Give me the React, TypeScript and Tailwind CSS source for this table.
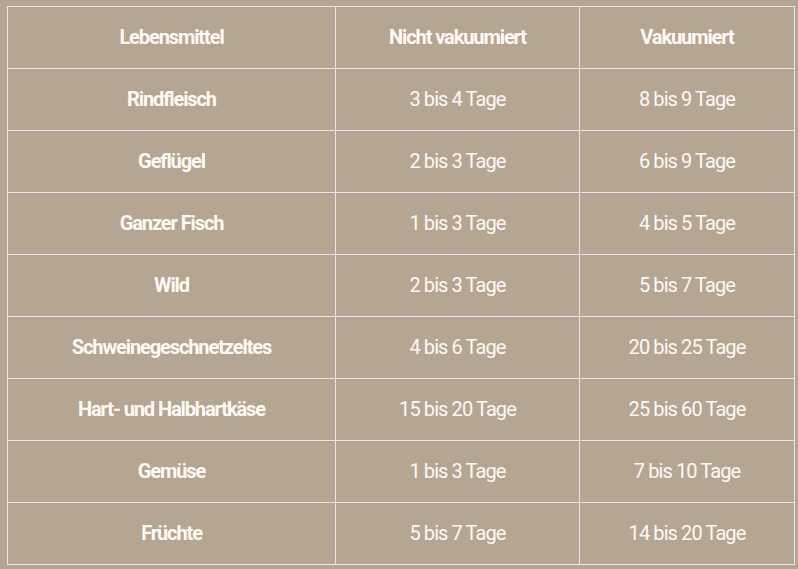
import React from 'react';

const rows: [string, string, string][] = [
  ['Rindfleisch', '3 bis 4 Tage', '8 bis 9 Tage'],
  ['Geflügel', '2 bis 3 Tage', '6 bis 9 Tage'],
  ['Ganzer Fisch', '1 bis 3 Tage', '4 bis 5 Tage'],
  ['Wild', '2 bis 3 Tage', '5 bis 7 Tage'],
  ['Schweinegeschnetzeltes', '4 bis 6 Tage', '20 bis 25 Tage'],
  ['Hart- und Halbhartkäse', '15 bis 20 Tage', '25 bis 60 Tage'],
  ['Gemüse', '1 bis 3 Tage', '7 bis 10 Tage'],
  ['Früchte', '5 bis 7 Tage', '14 bis 20 Tage'],
];

export default function App() {
  return (
    <div className="w-[798px] h-[569px] bg-[#b5a694] pt-[6px] pl-[7px] font-['Roboto',sans-serif] text-[#fdf9f5]">
      <table className="w-[787px] border-collapse table-fixed text-[20px] leading-none">
        <colgroup>
          <col className="w-[328px]" />
          <col className="w-[244px]" />
          <col className="w-[215px]" />
        </colgroup>
        <thead>
          <tr className="h-[62px]">
            {['Lebensmittel', 'Nicht vakuumiert', 'Vakuumiert'].map((h) => (
              <th key={h} className="border border-[#e9e5ee] pb-[2px] text-center font-bold tracking-[-0.055em]">
                {h}
              </th>
            ))}
          </tr>
        </thead>
        <tbody>
          {rows.map(([food, plain, vac]) => (
            <tr key={food} className="h-[62px]">
              <td className="border border-[#e9e5ee] pb-[2px] text-center font-bold tracking-[-0.055em]">{food}</td>
              <td className="border border-[#e9e5ee] pb-[2px] text-center tracking-[-0.045em]">{plain}</td>
              <td className="border border-[#e9e5ee] pb-[2px] text-center tracking-[-0.045em]">{vac}</td>
            </tr>
          ))}
        </tbody>
      </table>
    </div>
  );
}
